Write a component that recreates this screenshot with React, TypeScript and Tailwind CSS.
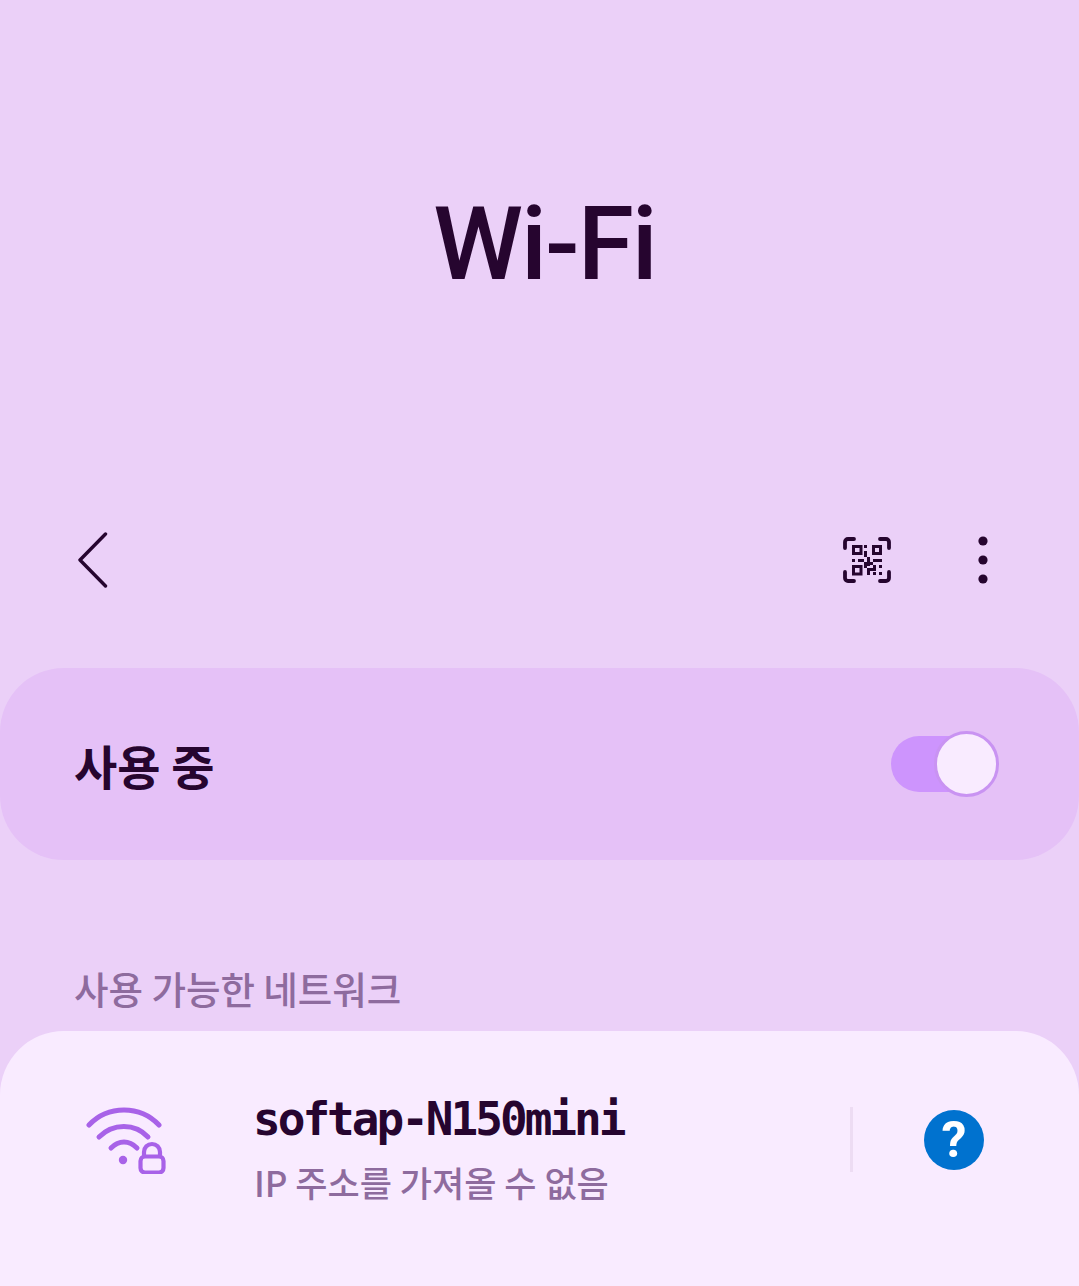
const cjk = "font-['Noto_Sans_CJK_KR','Noto_Sans',sans-serif]";

function BackIcon() {
  return (
    <svg width="30" height="56" viewBox="0 0 30 56" fill="none">
      <path d="M27.500 2 2 28l25.500 26" stroke="#26052f" strokeWidth="3.4" strokeLinecap="round" strokeLinejoin="round" />
    </svg>
  );
}

function QrIcon() {
  return (
    <svg width="48" height="46" viewBox="0 0 48 46" fill="none">
      <path d="M2 11V5a3 3 0 0 1 3-3h6M37 2h6a3 3 0 0 1 3 3v6M2 35v6a3 3 0 0 0 3 3h6M46 35v6a3 3 0 0 1-3 3h-6" stroke="#26052f" strokeWidth="3.8" strokeLinecap="round" />
      <g stroke="#26052f" strokeWidth="3">
        <rect x="10.500" y="9.500" width="7.500" height="7" />
        <rect x="30.500" y="9.500" width="7" height="7" />
        <rect x="10.500" y="29.500" width="7.500" height="7.500" />
      </g>
      <g fill="#26052f">
        <rect x="21" y="8" width="3" height="3" />
        <rect x="21" y="14" width="3" height="6" />
        <rect x="9" y="22" width="3" height="3" />
        <rect x="15" y="22" width="6" height="3" />
        <rect x="24" y="20" width="3" height="9" />
        <rect x="30" y="22" width="9" height="3" />
        <rect x="21" y="25" width="3" height="6" />
        <rect x="27" y="25" width="3" height="3" />
        <rect x="24" y="31" width="6" height="3" />
        <rect x="30" y="28" width="3" height="6" />
        <rect x="36" y="28" width="3" height="3" />
        <rect x="24" y="34" width="3" height="4" />
        <rect x="30" y="35" width="3" height="3" />
        <rect x="36" y="35" width="3" height="3" />
      </g>
    </svg>
  );
}

function MoreIcon() {
  return (
    <svg width="10" height="48" viewBox="0 0 10 48" fill="#26052f">
      <circle cx="5" cy="5" r="4.6" />
      <circle cx="5" cy="24" r="4.6" />
      <circle cx="5" cy="43" r="4.6" />
    </svg>
  );
}

function WifiLockIcon() {
  return (
    <svg width="80" height="68" viewBox="0 0 80 68" fill="none" stroke="#a862e8" strokeLinecap="round" strokeLinejoin="round">
      <path d="M3 19C22 -1 54 -1 73 19" strokeWidth="5" />
      <path d="M13 31C27 17 49 17 62 31" strokeWidth="5" />
      <path d="M25 42C33 34 43 34 51 42" strokeWidth="5" />
      <circle cx="37" cy="54" r="4.200" fill="#a862e8" stroke="none" />
      <rect x="54.500" y="50.500" width="23" height="16" rx="4.500" strokeWidth="4.200" />
      <path d="M58 50v-4a8 8 0 0 1 16 0v4" strokeWidth="4.200" />
    </svg>
  );
}

export default function App() {
  return (
    <div className="flex h-[1286px] w-full flex-col overflow-hidden bg-[#ebd0f8] text-[#26052f]">
      <div className="flex h-[486px] shrink-0 items-center justify-center pl-[10px]">
        <h1 className="pt-[2px] font-['Roboto',sans-serif] text-[102px] leading-none font-medium tracking-[-2px]">Wi-Fi</h1>
      </div>

      <div className="flex h-[148px] shrink-0 items-center justify-between pr-[91px] pl-[78px]">
        <BackIcon />
        <div className="flex items-center gap-[87px]">
          <QrIcon />
          <MoreIcon />
        </div>
      </div>

      <div className="mt-[34px] flex h-[192px] shrink-0 items-center justify-between rounded-[64px] bg-[#e5c1f7] pr-[80px] pl-[74px]">
        <span className={`${cjk} text-[47px] leading-none font-bold`}>사용 중</span>
        <div className="relative h-[56px] w-[108px] rounded-full">
          <div className="h-full w-[70px] rounded-l-full bg-[#cd94fd]" />
          <div className="absolute top-[-5px] right-0 h-[66px] w-[65px] rounded-full border-[3px] border-[#c993f2] bg-[#f9ebff]" />
        </div>
      </div>

      <div className="flex h-[171px] shrink-0 items-end pb-[20px] pl-[74px]">
        <span className={`${cjk} text-[37.500px] leading-[46px] font-medium text-[#8e6b9e]`}>사용 가능한 네트워크</span>
      </div>

      <div className="flex flex-1 items-start rounded-t-[64px] bg-[#f9ebff] pt-[58px] pl-[86px]">
        <div className="w-[167px] shrink-0 pt-[17px]">
          <WifiLockIcon />
        </div>
        <div className="flex w-[597px] shrink-0 flex-col gap-[9px]">
          <span className="font-['DejaVu_Sans_Mono',monospace] text-[46px] leading-[60px] font-bold tracking-[-3px]">softap-N150mini</span>
          <span className={`${cjk} ml-[1px] text-[35px] leading-[48px] font-medium text-[#8e6b9e]`}>IP 주소를 가져올 수 없음</span>
        </div>
        <div className="mt-[18px] h-[65px] w-[3px] shrink-0 bg-[#eddcf3]" />
        <div className="mt-[21px] ml-[71px] flex h-[60px] w-[60px] shrink-0 items-center justify-center rounded-full bg-[#0072cf] font-['Roboto',sans-serif] text-[50px] leading-none font-bold text-white">
          ?
        </div>
      </div>
    </div>
  );
}
